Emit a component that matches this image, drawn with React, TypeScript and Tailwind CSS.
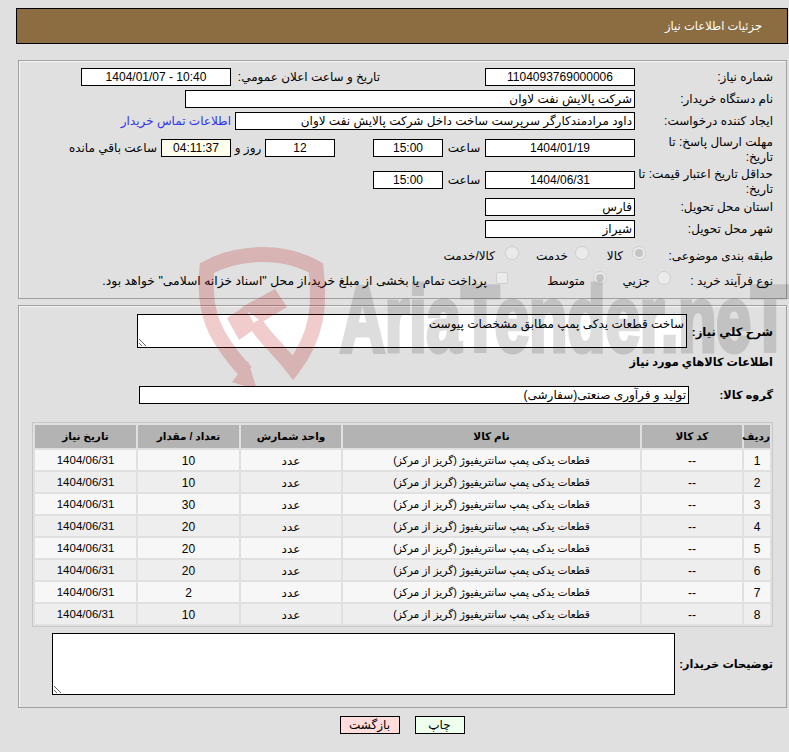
const ROWS = [
  { id: 1, qty: 10 },
  { id: 2, qty: 10 },
  { id: 3, qty: 30 },
  { id: 4, qty: 20 },
  { id: 5, qty: 20 },
  { id: 6, qty: 20 },
  { id: 7, qty: 2 },
  { id: 8, qty: 10 },
];

function Box({ value, className, center, bg }: { value: string; className: string; center?: boolean; bg?: string }) {
  return (
    <input
      readOnly
      defaultValue={value}
      className={`h-[18px] shrink-0 border border-black px-[2px] text-[12px] text-black outline-none ${bg ?? 'bg-white'} ${center ? 'text-center' : 'text-right'} ${className}`}
    />
  );
}

function Label({ children }: { children: React.ReactNode }) {
  return <div className="w-[133px] shrink-0 text-right leading-[18px]">{children}</div>;
}

function Radio({ checked, label, gap, width }: { checked?: boolean; label: string; gap: string; width?: string }) {
  return (
    <div className={`flex shrink-0 items-center ${width ?? ''}`}>
      <span className="flex h-[14px] w-[14px] shrink-0 -translate-y-[3px] items-center justify-center rounded-full border border-[#cfcfcf] bg-[#ebebeb]">
        {checked && <span className="h-[8px] w-[8px] rounded-full bg-[#c4c4c4]" />}
      </span>
      <span className={`whitespace-nowrap ${gap}`}>{label}</span>
    </div>
  );
}

// sits on top of the whole page, so it tints the white boxes too
function Watermark() {
  return (
    <svg
      className="pointer-events-none absolute top-[230px] left-0 z-20"
      width="789"
      height="156"
      viewBox="0 230 789 156"
    >
      <g opacity="0.2">
        <path
          d="M246 372 C212 335 203 310 207 268 C240 250 285 250 316 268 C320 305 318 335 293 368 C275 345 262 335 255 322"
          fill="none"
          stroke="#b80404"
          strokeWidth="15"
        />
        <path d="M232 382 L248 361 L257 390 Z" fill="#b80404" />
        <path d="M227 318 L245 306 L256 328 L239 340 Z" fill="#b80404" />
        <path d="M242 307 L275 289 L287 307 L262 322 Z" fill="#b80404" />
      </g>
      <text
        x="340"
        y="351"
        opacity="0.13"
        fill="#000"
        stroke="#000"
        strokeWidth="5"
        fontFamily="'Liberation Sans', sans-serif"
        fontWeight="700"
        fontSize="92"
        textLength="449"
        lengthAdjust="spacingAndGlyphs"
        direction="ltr"
      >
        AriaTender.neT
      </text>
    </svg>
  );
}

export default function App() {
  return (
    <div
      dir="rtl"
      className="relative h-[752px] overflow-hidden bg-[#e0e0e0] text-[12px] text-black [font-family:'Liberation_Sans','DejaVu_Sans',sans-serif]"
    >
      <div className="pt-[8px]">
        <div className="mr-[1px] ml-[16px] flex h-[36px] items-center border border-black bg-[#8c6d41] pt-[1px] pr-[25px] text-[11.5px] text-white">
          جزئیات اطلاعات نیاز
        </div>

        <div className="mt-[16px] mr-[2px] ml-[18px] h-[239px] border border-[#a0a0a0] pt-[7px] pr-[13px] shadow-[inset_1px_1px_0_#f4f4f4]">
          <div className="flex h-[18px] items-center">
            <Label>شماره نیاز:</Label>
            <Box value="1104093769000006" center className="mr-[5px] w-[150px]" />
            <div className="mr-[105px] w-[143px] shrink-0">تاریخ و ساعت اعلان عمومي:</div>
            <Box value="10:40 - 1404/01/07" center className="mr-[6px] w-[150px]" />
          </div>
          <div className="mt-[4px] flex h-[18px] items-center">
            <Label>نام دستگاه خریدار:</Label>
            <Box value="شرکت پالایش نفت لاوان" className="mr-[5px] w-[450px]" />
          </div>
          <div className="mt-[4px] flex h-[18px] items-center">
            <Label>ایجاد کننده درخواست:</Label>
            <Box value="داود مرادمندکارگر سرپرست ساخت داخل شرکت پالایش نفت لاوان" className="mr-[5px] w-[400px]" />
            <a className="mr-[4px] text-[#3333ee]">اطلاعات تماس خریدار</a>
          </div>
          <div className="mt-[4px] flex h-[30px] items-start">
            <div className="w-[133px] shrink-0 pt-[1px] text-right leading-[15px]">
              مهلت ارسال پاسخ: تا
              <br />
              تاریخ:
            </div>
            <div className="mt-[5px] flex items-center">
              <Box value="1404/01/19" center className="mr-[5px] w-[150px]" />
              <span className="w-[42px] shrink-0 text-center">ساعت</span>
              <Box value="15:00" center className="w-[70px]" />
              <Box value="12" center className="mr-[38px] w-[70px]" />
              <span className="w-[34px] shrink-0 text-center">روز و</span>
              <Box value="04:11:37" center bg="bg-[#ffffee]" className="w-[70px]" />
              <span className="mr-[4px] whitespace-nowrap">ساعت باقي مانده</span>
            </div>
          </div>
          <div className="mt-[3px] flex h-[30px] items-start">
            <div className="w-[133px] shrink-0 text-right leading-[15px] whitespace-nowrap">
              حداقل تاریخ اعتبار قیمت: تا
              <br />
              تاریخ:
            </div>
            <div className="mt-[4px] flex items-center">
              <Box value="1404/06/31" center className="mr-[5px] w-[150px]" />
              <span className="w-[42px] shrink-0 text-center">ساعت</span>
              <Box value="15:00" center className="w-[70px]" />
            </div>
          </div>
          <div className="mt-[1px] flex h-[18px] items-center">
            <Label>استان محل تحویل:</Label>
            <Box value="فارس" className="mr-[5px] w-[150px]" />
          </div>
          <div className="mt-[4px] flex h-[18px] items-center">
            <Label>شهر محل تحویل:</Label>
            <Box value="شیراز" className="mr-[5px] w-[150px]" />
          </div>
          <div className="mt-[9px] flex h-[18px] items-center">
            <div className="w-[127px] shrink-0 whitespace-nowrap">طبقه بندی موضوعی:</div>
            <Radio checked label="کالا" gap="mr-[9px]" width="w-[57px]" />
            <Radio label="خدمت" gap="mr-[7px]" width="w-[70px]" />
            <Radio label="کالا/خدمت" gap="mr-[10px]" />
          </div>
          <div className="mt-[7px] flex h-[18px] items-center">
            <div className="w-[102px] shrink-0 whitespace-nowrap">نوع فرآیند خرید :</div>
            <Radio label="جزیي" gap="mr-[7px]" width="w-[64px]" />
            <Radio checked label="متوسط" gap="mr-[8px]" width="w-[99px]" />
            <span className="h-[12px] w-[12px] shrink-0 -translate-y-[3px] rounded-[2px] border border-[#cfcfcf] bg-[#ebebeb]" />
            <span className="mr-[9px] text-[12.35px] whitespace-nowrap">
              پرداخت تمام یا بخشی از مبلغ خرید،از محل "اسناد خزانه اسلامی" خواهد بود.
            </span>
          </div>
        </div>

        <div className="mt-[6px] mr-[2px] ml-[18px] h-[403px] border border-[#a0a0a0] pt-[8px] pr-[13px] shadow-[inset_1px_1px_0_#f4f4f4]">
          <div className="flex items-start">
            <div className="w-[86px] shrink-0 pt-[9px] text-right text-[11.7px] leading-[18px] font-bold whitespace-nowrap">شرح کلي نیاز:</div>
            <textarea
              readOnly
              defaultValue="ساخت قطعات یدکی پمپ مطابق مشخصات پیوست"
              className="h-[34px] w-[550px] border border-black bg-white px-[2px] text-[12px] leading-[18px] outline-none"
            />
          </div>
          <div className="mt-[5px] text-[11.3px] leading-[18px] font-bold">اطلاعات کالاهاي مورد نیاز</div>
          <div className="mt-[15px] flex h-[18px] items-center">
            <div className="w-[84px] shrink-0 text-[11.3px] font-bold">گروه کالا:</div>
            <Box value="تولید و فرآوری صنعتی(سفارشی)" className="w-[550px]" />
          </div>
          <table className="mt-[18px] w-[741px] table-fixed border-separate border-spacing-[2px] border border-[#c8c8c8] text-center">
            <thead>
              <tr className="h-[23px] bg-[#b3b3b3] text-[10.5px] font-bold">
                <th className="w-[26px] p-0">ردیف</th>
                <th className="w-[100px] p-0">کد کالا</th>
                <th className="w-[297px] p-0">نام کالا</th>
                <th className="w-[100px] p-0">واحد شمارش</th>
                <th className="w-[101px] p-0">تعداد / مقدار</th>
                <th className="p-0">تاریخ نیاز</th>
              </tr>
            </thead>
            <tbody>
              {ROWS.map((row) => (
                <tr key={row.id} className={`h-[20px] ${row.id % 2 ? 'bg-[#f7f7f7]' : 'bg-[#eeeeee]'}`}>
                  <td className="p-0 pt-[1px]">{row.id}</td>
                  <td className="p-0 pt-[1px]">--</td>
                  <td className="p-0 pt-[1px] text-[10.7px]">قطعات یدکی پمپ سانتریفیوژ (گریز از مرکز)</td>
                  <td className="p-0 pt-[1px]">عدد</td>
                  <td className="p-0 pt-[1px]">{row.qty}</td>
                  <td className="p-0 pt-[1px] text-[11.5px]">1404/06/31</td>
                </tr>
              ))}
            </tbody>
          </table>
          <div className="mt-[6px] flex items-center">
            <div className="w-[98px] shrink-0 text-[11.3px] font-bold whitespace-nowrap">توضیحات خریدار:</div>
            <textarea readOnly className="h-[62px] w-[623px] border border-black bg-white outline-none" />
          </div>
        </div>

        <div className="mt-[8px] flex justify-center gap-[15px] pl-[15px]">
          <button className="h-[18px] w-[50px] border border-black bg-[#eeffee] text-[12px] leading-[16px]">چاپ</button>
          <button className="h-[18px] w-[60px] border border-black bg-[#ffdddd] text-[12px] leading-[16px]">بازگشت</button>
        </div>
      </div>
      <Watermark />
    </div>
  );
}
